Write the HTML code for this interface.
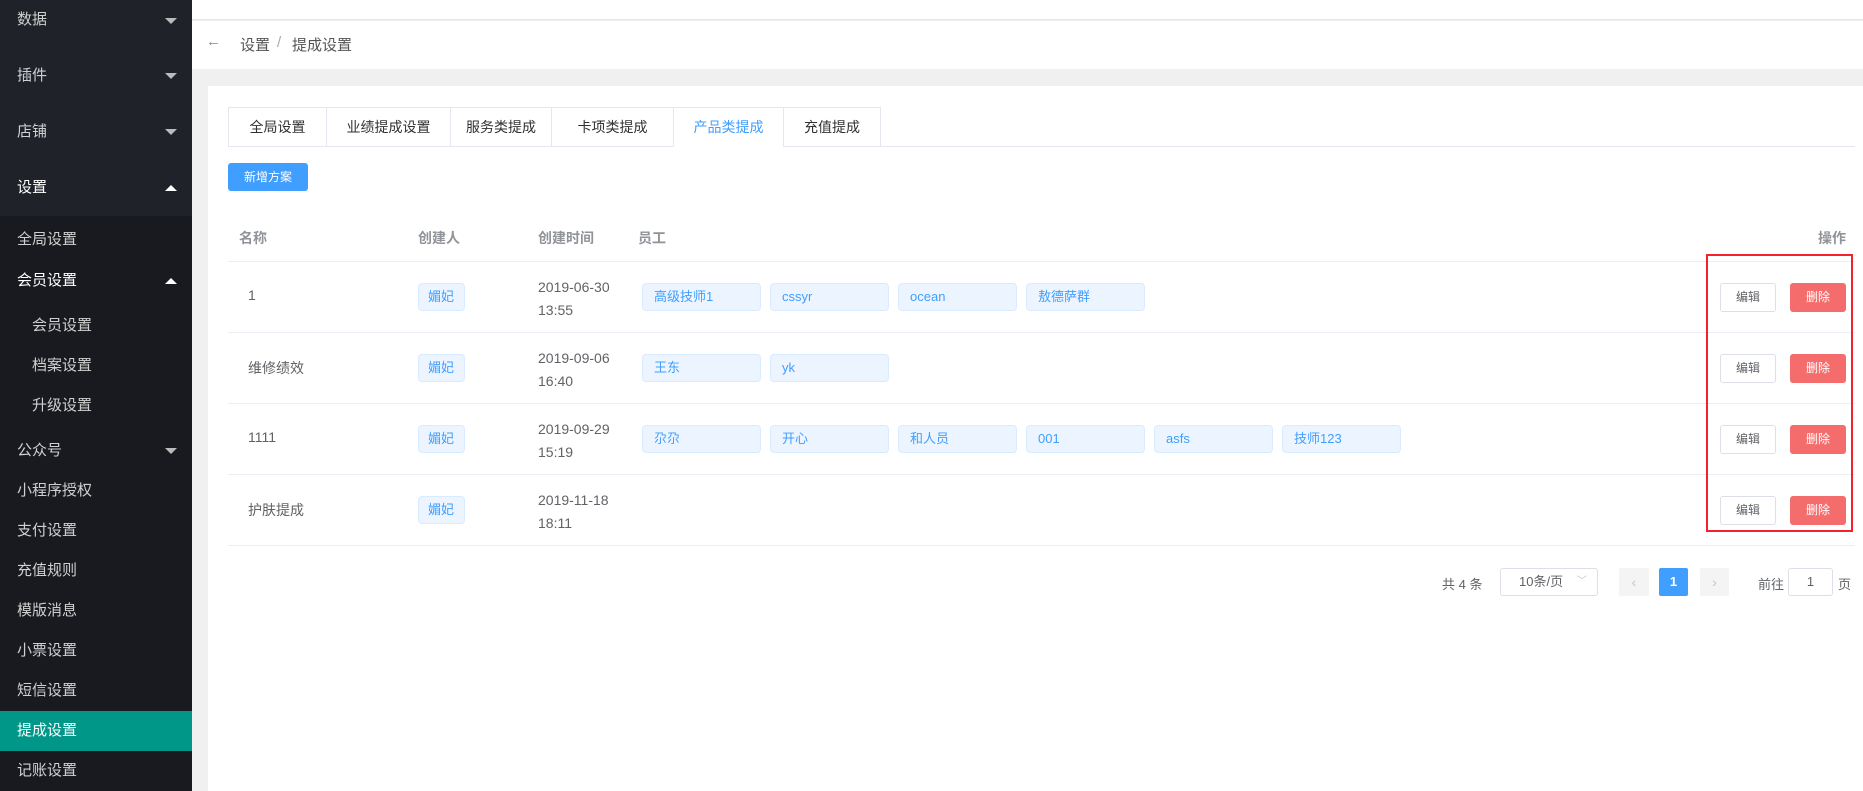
<!DOCTYPE html>
<html><head><meta charset="utf-8"><style>
*{margin:0;padding:0;box-sizing:border-box}
body{width:1863px;height:791px;overflow:hidden;background:#f0f0f0;font-family:"Liberation Sans","Noto Sans CJK SC",sans-serif;font-size:14px;color:#606266;position:relative}
.a{position:absolute}
.side{left:0;top:0;width:192px;height:791px;background:#191a1f}
.side .top{left:0;top:0;width:192px;height:216px;background:#20222a}
.mi{position:absolute;left:17px;color:#d0d0d0;font-size:15px;line-height:20px}
.car{position:absolute;left:165px;width:0;height:0;border-left:6px solid transparent;border-right:6px solid transparent}
.dn{border-top:6px solid #bbb}.up{border-bottom:6px solid #fff}
.topbar{left:192px;top:0;width:1671px;height:20px;background:#fff;border-bottom:1px solid #e6e6e6}
.bc{left:192px;top:21px;width:1671px;height:48px;background:#fff;font-size:15px;color:#555}
.card{left:208px;top:86px;width:1655px;height:705px;background:#fff}
.tab{position:absolute;top:107px;height:40px;border:1px solid #e4e7ed;border-right:none;background:#fff;font-size:14px;color:#303133;text-align:center;line-height:38px}
.th{position:absolute;top:228px;color:#909399;font-size:14px;font-weight:bold}
.ln{position:absolute;left:228px;width:1627px;height:1px;background:#ebeef5}
.tag{position:absolute;height:28px;width:119px;background:#ecf5ff;border:1px solid #d9ecff;border-radius:4px;color:#409eff;font-size:13px;line-height:26px;padding-left:11px}
.ctag{width:47px;padding-left:9px}
.td{position:absolute;color:#606266;font-size:14px}
.eb{position:absolute;left:1720px;width:56px;height:29px;border:1px solid #dcdfe6;border-radius:3px;background:#fff;font-size:12px;color:#606266;text-align:center;line-height:27px}
.db{position:absolute;left:1790px;width:56px;height:29px;border-radius:3px;background:#f56c6c;font-size:12px;color:#fff;text-align:center;line-height:29px}
</style></head><body>
<div class="a side">
<div class="a top"></div>
<div class="mi" style="top:10px">数据</div><div class="car dn" style="top:18px"></div>
<div class="mi" style="top:66px">插件</div><div class="car dn" style="top:73px"></div>
<div class="mi" style="top:122px">店铺</div><div class="car dn" style="top:129px"></div>
<div class="mi" style="top:178px;color:#fff">设置</div><div class="car up" style="top:185px"></div>
<div class="mi" style="top:230px">全局设置</div>
<div class="mi" style="top:271px;color:#fff">会员设置</div><div class="car up" style="top:278px"></div>
<div class="mi" style="top:316px;left:32px">会员设置</div>
<div class="mi" style="top:356px;left:32px">档案设置</div>
<div class="mi" style="top:396px;left:32px">升级设置</div>
<div class="mi" style="top:441px">公众号</div><div class="car dn" style="top:448px"></div>
<div class="mi" style="top:481px">小程序授权</div>
<div class="mi" style="top:521px">支付设置</div>
<div class="mi" style="top:561px">充值规则</div>
<div class="mi" style="top:601px">模版消息</div>
<div class="mi" style="top:641px">小票设置</div>
<div class="mi" style="top:681px">短信设置</div>
<div class="a" style="left:0;top:711px;width:192px;height:40px;background:#009688"></div>
<div class="mi" style="top:721px;color:#fff">提成设置</div>
<div class="mi" style="top:761px">记账设置</div>
</div>
<div class="a topbar"></div>
<div class="a bc"><span class="a" style="left:14px;top:12px;color:#888">←</span><span class="a" style="left:48px;top:13px">设置</span><span class="a" style="left:85px;top:13px;color:#aaa">/</span><span class="a" style="left:100px;top:13px">提成设置</span></div>
<div class="a card"></div>
<div class="tab" style="left:228px;width:98px">全局设置</div>
<div class="tab" style="left:326px;width:124px">业绩提成设置</div>
<div class="tab" style="left:450px;width:101px">服务类提成</div>
<div class="tab" style="left:551px;width:122px">卡项类提成</div>
<div class="tab" style="left:673px;width:110px;color:#409eff;border-bottom-color:#fff">产品类提成</div>
<div class="tab" style="left:783px;width:98px;border-right:1px solid #e4e7ed">充值提成</div>
<div class="ln" style="left:881px;width:974px;top:146px;background:#e4e7ed"></div>
<div class="a" style="left:228px;top:163px;width:80px;height:28px;background:#409eff;border-radius:3px;color:#fff;font-size:12px;text-align:center;line-height:28px">新增方案</div>
<div class="th" style="left:239px">名称</div><div class="th" style="left:418px">创建人</div><div class="th" style="left:538px">创建时间</div><div class="th" style="left:638px">员工</div><div class="th" style="left:1818px">操作</div>
<div class="ln" style="top:261px"></div><div class="ln" style="top:332px"></div><div class="ln" style="top:403px"></div><div class="ln" style="top:474px"></div><div class="ln" style="top:545px"></div>
<!-- row1 -->
<div class="td" style="left:248px;top:287px">1</div>
<div class="tag ctag" style="left:418px;top:283px">媚妃</div>
<div class="td" style="left:538px;top:276px;line-height:23px">2019-06-30<br>13:55</div>
<div class="tag" style="left:642px;top:283px">高级技师1</div><div class="tag" style="left:770px;top:283px">cssyr</div><div class="tag" style="left:898px;top:283px">ocean</div><div class="tag" style="left:1026px;top:283px">敖德萨群</div>
<div class="eb" style="top:283px">编辑</div><div class="db" style="top:283px">删除</div>
<!-- row2 -->
<div class="td" style="left:248px;top:358px">维修绩效</div>
<div class="tag ctag" style="left:418px;top:354px">媚妃</div>
<div class="td" style="left:538px;top:347px;line-height:23px">2019-09-06<br>16:40</div>
<div class="tag" style="left:642px;top:354px">王东</div><div class="tag" style="left:770px;top:354px">yk</div>
<div class="eb" style="top:354px">编辑</div><div class="db" style="top:354px">删除</div>
<!-- row3 -->
<div class="td" style="left:248px;top:429px">1111</div>
<div class="tag ctag" style="left:418px;top:425px">媚妃</div>
<div class="td" style="left:538px;top:418px;line-height:23px">2019-09-29<br>15:19</div>
<div class="tag" style="left:642px;top:425px">尕尕</div><div class="tag" style="left:770px;top:425px">开心</div><div class="tag" style="left:898px;top:425px">和人员</div><div class="tag" style="left:1026px;top:425px">001</div><div class="tag" style="left:1154px;top:425px">asfs</div><div class="tag" style="left:1282px;top:425px">技师123</div>
<div class="eb" style="top:425px">编辑</div><div class="db" style="top:425px">删除</div>
<!-- row4 -->
<div class="td" style="left:248px;top:500px">护肤提成</div>
<div class="tag ctag" style="left:418px;top:496px">媚妃</div>
<div class="td" style="left:538px;top:489px;line-height:23px">2019-11-18<br>18:11</div>
<div class="eb" style="top:496px">编辑</div><div class="db" style="top:496px">删除</div>
<div class="a" style="left:1706px;top:254px;width:147px;height:278px;border:2px solid #f5222d"></div>
<!-- pagination -->
<div class="td" style="left:1442px;top:574px;font-size:13px">共 4 条</div>
<div class="a" style="left:1500px;top:568px;width:98px;height:28px;border:1px solid #dcdfe6;border-radius:3px;font-size:13px;line-height:26px;padding-left:18px">10条/页<span style="position:absolute;right:10px;color:#c0c4cc;font-size:10px">﹀</span></div>
<div class="a" style="left:1619px;top:568px;width:30px;height:28px;background:#f4f4f5;border-radius:2px;color:#c0c4cc;text-align:center;line-height:28px">‹</div>
<div class="a" style="left:1659px;top:568px;width:29px;height:28px;background:#409eff;border-radius:2px;color:#fff;font-weight:bold;text-align:center;line-height:28px;font-size:13px">1</div>
<div class="a" style="left:1700px;top:568px;width:29px;height:28px;background:#f4f4f5;border-radius:2px;color:#c0c4cc;text-align:center;line-height:28px">›</div>
<div class="td" style="left:1758px;top:574px;font-size:13px">前往</div>
<div class="a" style="left:1788px;top:568px;width:45px;height:28px;border:1px solid #dcdfe6;border-radius:3px;font-size:13px;text-align:center;line-height:26px">1</div>
<div class="td" style="left:1838px;top:574px;font-size:13px">页</div>
</body></html>
